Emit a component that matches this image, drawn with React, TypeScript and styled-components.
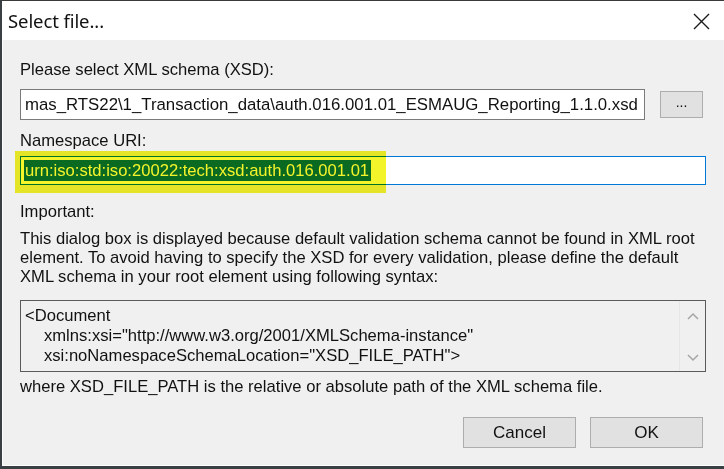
import styled, { createGlobalStyle } from "styled-components"

const GlobalStyle = createGlobalStyle`
  html, body {
    margin: 0;
    padding: 0;
    background: #ffffff;
  }
  * {
    box-sizing: border-box;
  }
`

const FILE_PATH =
  "mas_RTS22\\1_Transaction_data\\auth.016.001.01_ESMAUG_Reporting_1.1.0.xsd"
const NAMESPACE = "urn:iso:std:iso:20022:tech:xsd:auth.016.001.01"

export default function App() {
  return (
    <>
      <GlobalStyle />
      <StyledWindow>
        <StyledTitleBar>
          <StyledTitle>Select file...</StyledTitle>
          <StyledClose aria-label="Close">
            <svg width="17" height="17" viewBox="0 0 17 17">
              <path d="M1 1 L16 16 M16 1 L1 16" stroke="#1a1a1a" strokeWidth="1.4" fill="none" />
            </svg>
          </StyledClose>
        </StyledTitleBar>

        <StyledBody>
          <StyledLabel $gap={20}>Please select XML schema (XSD):</StyledLabel>
          <StyledFileRow>
            <StyledTextBox>{FILE_PATH}</StyledTextBox>
            <StyledSmallButton>...</StyledSmallButton>
          </StyledFileRow>

          <StyledLabel $gap={11}>Namespace URI:</StyledLabel>
          <StyledNamespaceWrap>
            <StyledNamespaceBox>
              <StyledSelection>{NAMESPACE}</StyledSelection>
            </StyledNamespaceBox>
            <StyledHighlighter />
          </StyledNamespaceWrap>

          <StyledLabel $gap={17}>Important:</StyledLabel>
          <StyledParagraph>
            This dialog box is displayed because default validation schema cannot be found in XML root
            <br />
            element. To avoid having to specify the XSD for every validation, please define the default
            <br />
            XML schema in your root element using following syntax:
          </StyledParagraph>

          <StyledCodeBox>
            <StyledCode>
              <StyledCodeLine>&lt;Document</StyledCodeLine>
              <StyledCodeLine $indent>xmlns:xsi="http://www.w3.org/2001/XMLSchema-instance"</StyledCodeLine>
              <StyledCodeLine $indent>xsi:noNamespaceSchemaLocation="XSD_FILE_PATH"&gt;</StyledCodeLine>
            </StyledCode>
            <StyledScrollBar>
              <svg width="14" height="10" viewBox="0 0 14 10">
                <path d="M2 8 L7 3 L12 8" stroke="#a6a6a6" strokeWidth="1.5" fill="none" />
              </svg>
              <svg width="14" height="10" viewBox="0 0 14 10">
                <path d="M2 2 L7 7 L12 2" stroke="#a6a6a6" strokeWidth="1.5" fill="none" />
              </svg>
            </StyledScrollBar>
          </StyledCodeBox>

          <StyledLabel $gap={5}>
            where XSD_FILE_PATH is the relative or absolute path of the XML schema file.
          </StyledLabel>

          <StyledButtonRow>
            <StyledButton>Cancel</StyledButton>
            <StyledButton>OK</StyledButton>
          </StyledButtonRow>
        </StyledBody>
      </StyledWindow>
    </>
  )
}

const StyledWindow = styled.div`
  width: 724px;
  height: 469px;
  display: flex;
  flex-direction: column;
  border-top: 1px solid #3a3a3a;
  border-left: 2px solid #3a3f44;
  border-bottom: 3px solid #3a3f44;
  background: #f0f0f0;
  font-family: "Liberation Sans", Arial, sans-serif;
  color: #111;
  overflow: hidden;
`
const StyledTitleBar = styled.div`
  display: flex;
  align-items: center;
  justify-content: space-between;
  height: 39px;
  padding: 0 14px 0 6px;
  background: #ffffff;
`
const StyledTitle = styled.div`
  font-family: "Noto Sans", "Open Sans", sans-serif;
  font-size: 18.5px;
  color: #111;
  letter-spacing: -0.1px;
`
const StyledClose = styled.div`
  display: flex;
  align-items: center;
  margin-top: 2px;
`
const StyledBody = styled.div`
  flex: 1;
  display: flex;
  flex-direction: column;
  padding: 0 18px 16px 17px;
  border-left: 1px solid #fbfbfb;
  border-bottom: 1px solid #ffffff;
  font-size: 16.6px;
  line-height: 19px;
`
const StyledLabel = styled.div<{ $gap: number }>`
  margin-top: ${({ $gap }) => $gap}px;
  white-space: nowrap;
`
const StyledFileRow = styled.div`
  display: flex;
  align-items: center;
  gap: 15px;
  margin-top: 10px;
`
const StyledTextBox = styled.div`
  width: 625px;
  height: 31px;
  display: flex;
  align-items: center;
  padding: 0 1px 0 4px;
  background: #ffffff;
  border: 1px solid #7a7a7a;
  font-size: 16.8px;
  white-space: nowrap;
  overflow: hidden;
`
const StyledSmallButton = styled.div`
  width: 43px;
  height: 27px;
  display: flex;
  align-items: center;
  justify-content: center;
  padding-bottom: 4px;
  background: #e1e1e1;
  border: 1px solid #adadad;
  font-size: 14px;
`
const StyledNamespaceWrap = styled.div`
  position: relative;
  margin-top: 6px;
`
const StyledNamespaceBox = styled.div`
  height: 29px;
  display: flex;
  align-items: center;
  padding: 0 3px;
  background: #ffffff;
  border: 1px solid #0078d7;
`
const StyledSelection = styled.span`
  display: inline-block;
  height: 21px;
  line-height: 21px;
  padding: 0 2px 0 1px;
  background: #0a6fc8;
  color: #ffffff;
  white-space: nowrap;
`
const StyledHighlighter = styled.div`
  position: absolute;
  left: -5px;
  top: -5px;
  width: 371px;
  height: 42px;
  background: #f4f42a;
  mix-blend-mode: multiply;
  pointer-events: none;
`
const StyledParagraph = styled.div`
  margin-top: 8px;
  white-space: nowrap;
`
const StyledCodeBox = styled.div`
  display: flex;
  height: 72px;
  margin-top: 14px;
  border: 1px solid #5a5a5a;
  background: #f0f0f0;
`
const StyledCode = styled.div`
  flex: 1;
  padding: 5px 4px;
  line-height: 20px;
  white-space: nowrap;
  overflow: hidden;
`
const StyledCodeLine = styled.div<{ $indent?: boolean }>`
  padding-left: ${({ $indent }) => ($indent ? "19px" : "0")};
`
const StyledScrollBar = styled.div`
  width: 26px;
  display: flex;
  flex-direction: column;
  align-items: center;
  justify-content: space-between;
  padding: 10px 0 8px;
  border-left: 1px solid #e6e6e6;
  background: #f0f0f0;
`
const StyledButtonRow = styled.div`
  display: flex;
  justify-content: flex-end;
  gap: 14px;
  margin-top: 21px;
  padding-right: 3px;
`
const StyledButton = styled.div`
  width: 113px;
  height: 31px;
  display: flex;
  align-items: center;
  justify-content: center;
  background: #e1e1e1;
  border: 1px solid #adadad;
  font-size: 17px;
`
